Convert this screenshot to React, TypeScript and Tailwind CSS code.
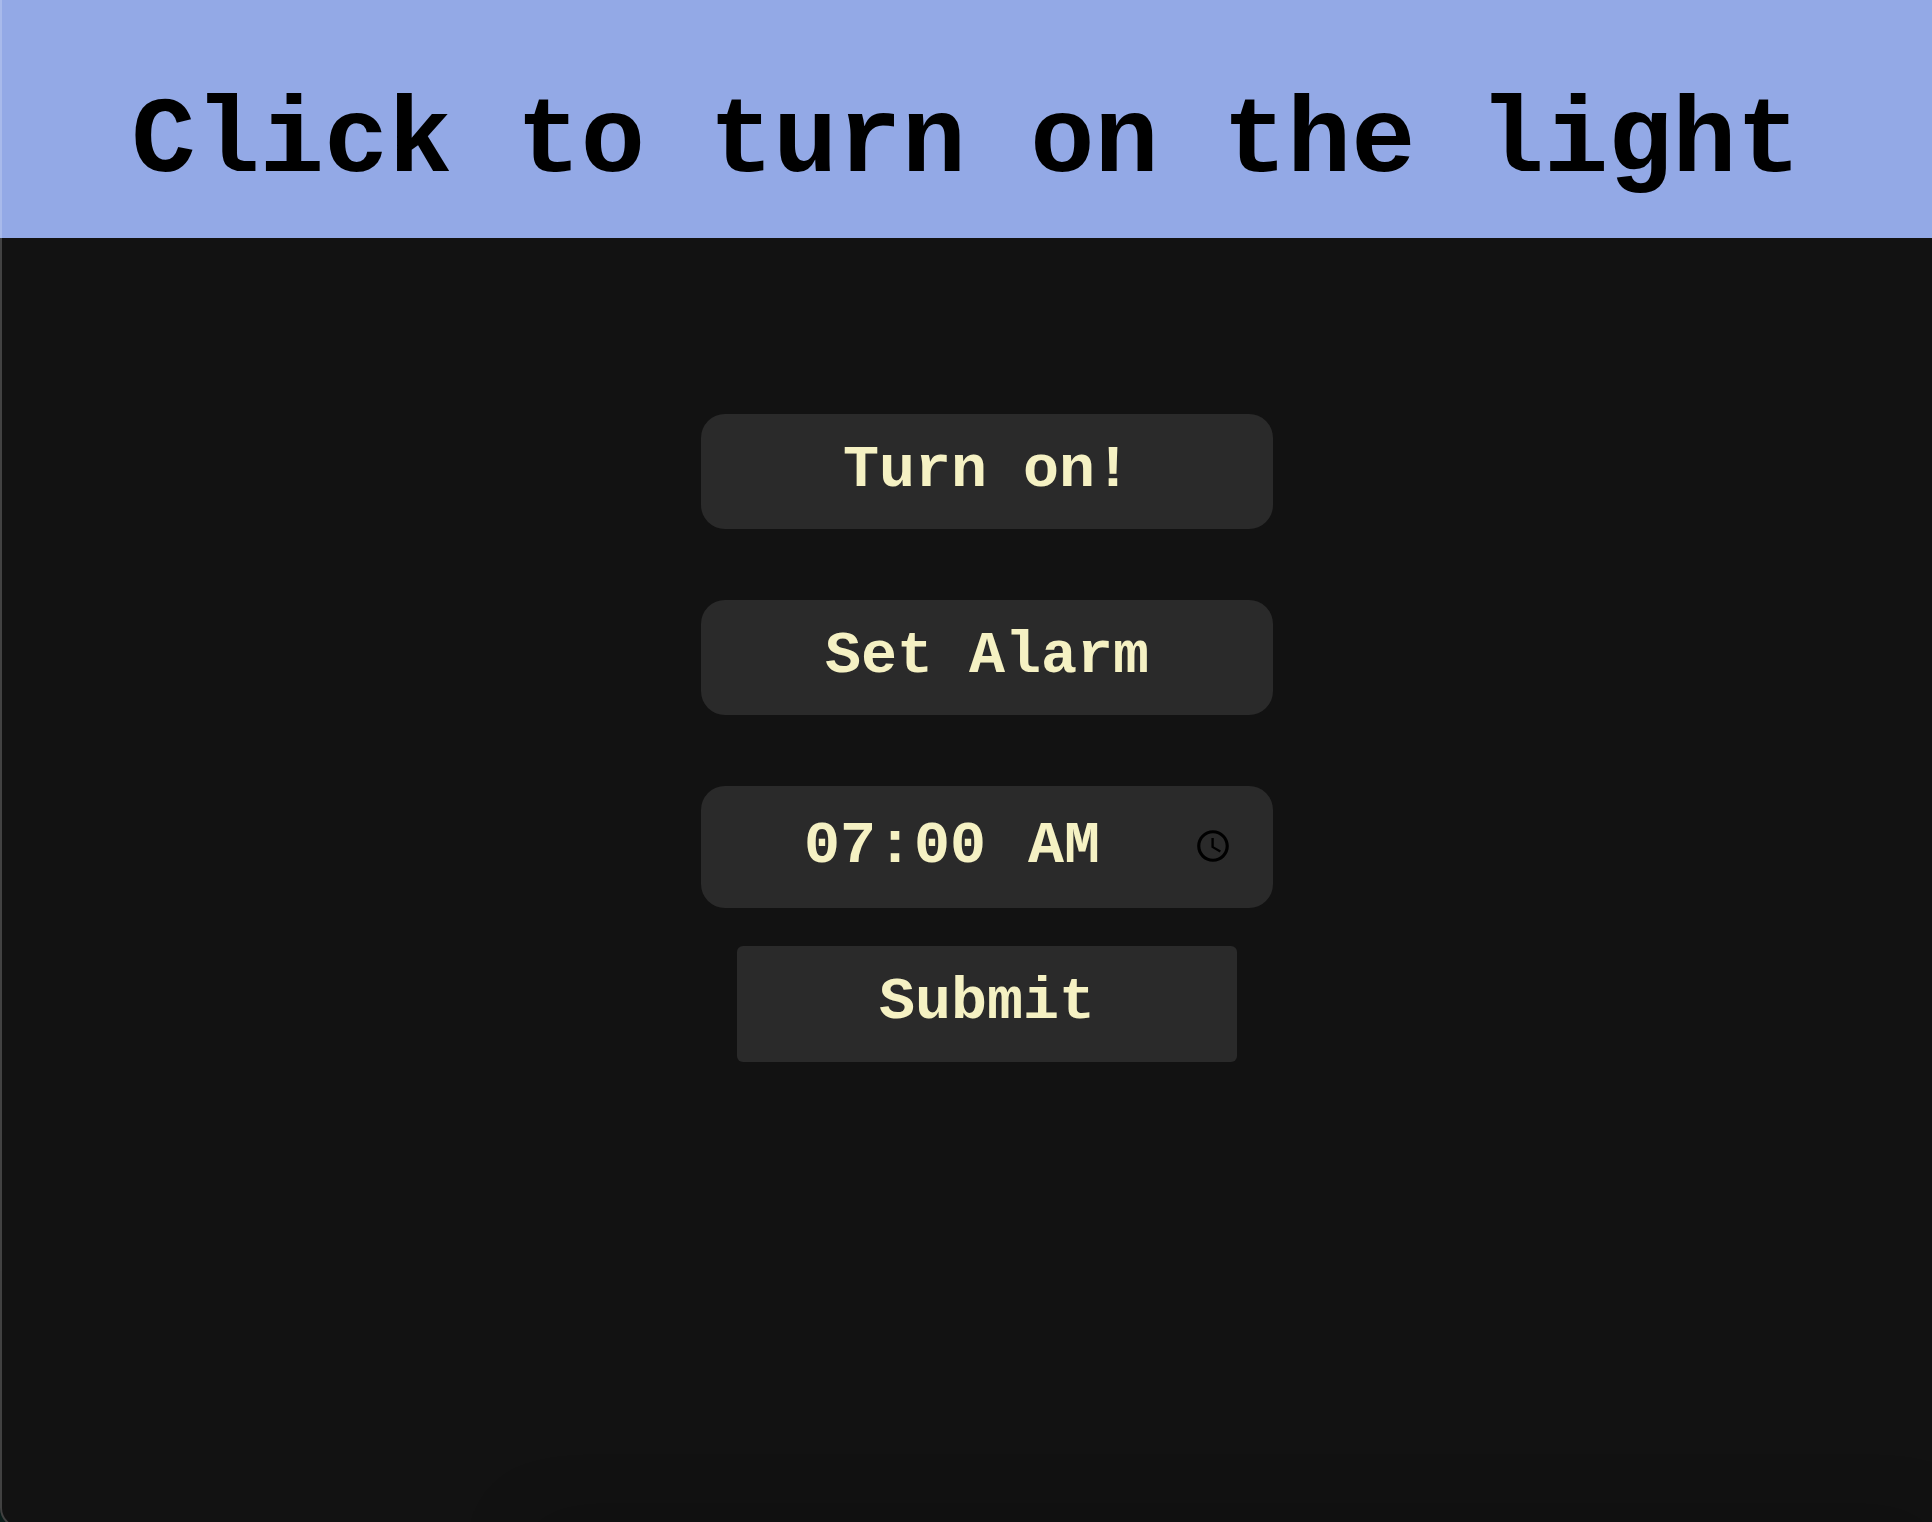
import React, { useState } from "react";

const control =
  "bg-[#2a2a2a] text-[60px] leading-[68px] font-bold text-[#f5f1c3]";

export default function App() {
  const [time, setTime] = useState("07:00");

  return (
    <div className="relative min-h-screen overflow-hidden bg-[#121212] font-['Liberation_Mono',monospace]">
      <header className="flex justify-center bg-[#93a9e6] pt-[83px] pb-[35px]">
        <h1 className="text-center text-[107px] leading-[120px] font-bold whitespace-nowrap text-black">
          Click to turn on the light
        </h1>
      </header>
      <main className="flex flex-col items-center pt-44 pl-[42px]">
        <button type="button" className={`${control} h-[115px] w-[572px] rounded-3xl pb-1`}>
          Turn on!
        </button>
        <button type="button" className={`${control} mt-[71px] h-[115px] w-[572px] rounded-3xl pb-1`}>
          Set Alarm
        </button>
        <form className="mt-[71px] flex flex-col items-center" onSubmit={(e) => e.preventDefault()}>
          <input
            type="time"
            aria-label="Alarm time"
            value={time}
            onChange={(e) => setTime(e.target.value)}
            className={`${control} h-[122px] w-[572px] rounded-3xl pr-[41px] pl-[102px] pb-0.5 [&::-webkit-calendar-picker-indicator]:size-[38px] [&::-webkit-calendar-picker-indicator]:p-0 [&::-webkit-datetime-edit-ampm-field]:ml-[22px]`}
          />
          <button type="submit" className={`${control} mt-[38px] h-[116px] w-[500px] rounded-md pb-1`}>
            Submit
          </button>
        </form>
      </main>
      <div className="pointer-events-none absolute right-0 -bottom-20 left-[530px] h-20 shadow-[0_0_70px_rgba(0,0,0,0.2)]" />
      <div className="pointer-events-none absolute inset-x-0 top-0 -bottom-1.5 rounded-bl-[20px] border-b-2 border-l-2 border-white/20 shadow-[0_0_0_20px_#0b1d1a]" />
    </div>
  );
}
